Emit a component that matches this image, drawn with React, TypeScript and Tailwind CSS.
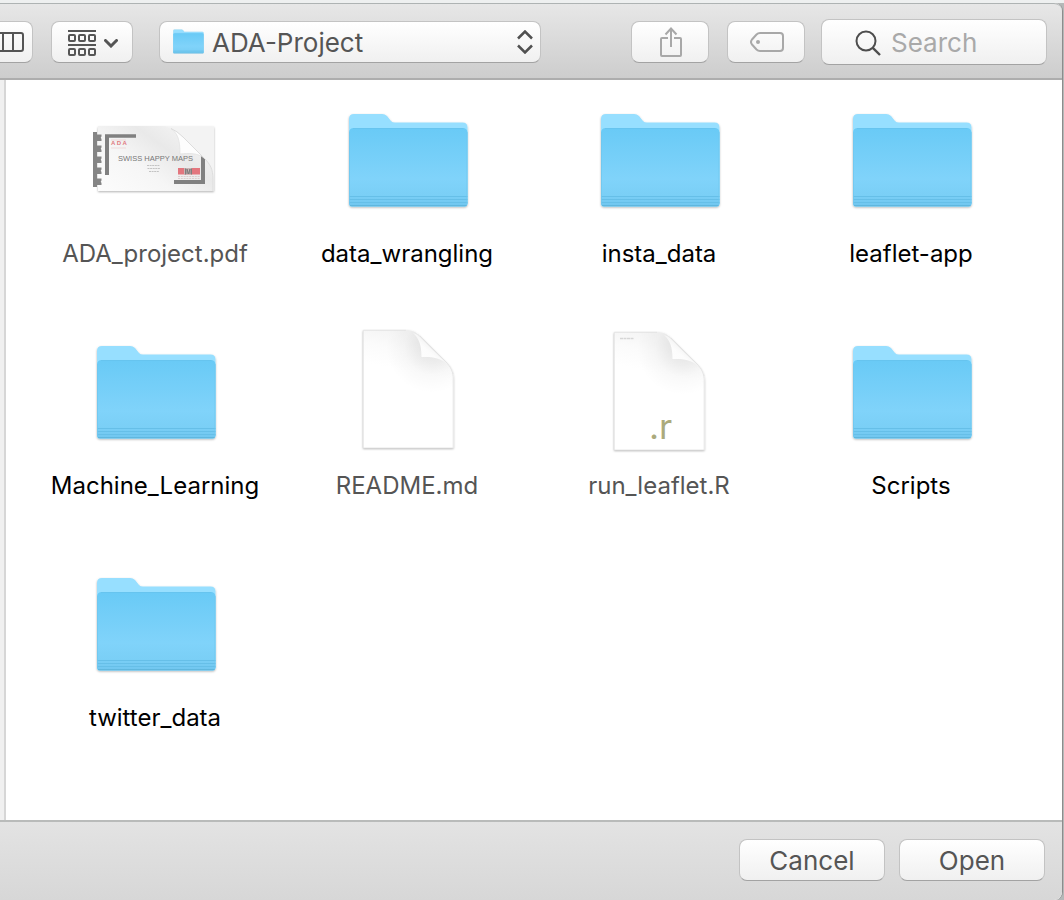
import React, { useState } from "react";

type Kind = "folder" | "pdf" | "blank" | "r";

const files: { name: string; kind: Kind }[] = [
  { name: "ADA_project.pdf", kind: "pdf" },
  { name: "data_wrangling", kind: "folder" },
  { name: "insta_data", kind: "folder" },
  { name: "leaflet-app", kind: "folder" },
  { name: "Machine_Learning", kind: "folder" },
  { name: "README.md", kind: "blank" },
  { name: "run_leaflet.R", kind: "r" },
  { name: "Scripts", kind: "folder" },
  { name: "twitter_data", kind: "folder" },
];

const control =
  "flex items-center justify-center border border-[#c3c3c3] border-b-[#a3a3a3] bg-linear-to-b from-white to-[#f0f0f0] text-[#555]";

function Defs() {
  return (
    <svg className="absolute size-0" aria-hidden="true">
      <defs>
        <linearGradient id="folderFront" x1="0" y1="0" x2="0" y2="1">
          <stop offset="0" stopColor="#69caf6" />
          <stop offset="0.65" stopColor="#80d3fa" />
          <stop offset="0.86" stopColor="#7acff6" />
          <stop offset="1" stopColor="#70c6ef" />
        </linearGradient>
        <linearGradient id="pageShade" x1="0.35" y1="0" x2="0.2" y2="1">
          <stop offset="0" stopColor="#f4f4f4" />
          <stop offset="0.15" stopColor="#fbfbfb" />
          <stop offset="0.32" stopColor="#ffffff" />
        </linearGradient>
        <radialGradient id="curlShade" gradientUnits="userSpaceOnUse" cx="88" cy="18" r="46">
          <stop offset="0" stopColor="#000" stopOpacity="0.1" />
          <stop offset="0.35" stopColor="#000" stopOpacity="0.06" />
          <stop offset="0.6" stopColor="#000" stopOpacity="0.025" />
          <stop offset="1" stopColor="#000" stopOpacity="0" />
        </radialGradient>
        <linearGradient id="fold" x1="0" y1="1" x2="0.6" y2="0.35">
          <stop offset="0" stopColor="#ffffff" />
          <stop offset="0.7" stopColor="#fcfcfc" />
          <stop offset="1" stopColor="#f0f0f0" />
        </linearGradient>
        <linearGradient id="pdfShade" x1="0" y1="1" x2="1" y2="0.2">
          <stop offset="0" stopColor="#fcfcfc" />
          <stop offset="0.4" stopColor="#f6f6f6" />
          <stop offset="0.68" stopColor="#e9e9e9" />
          <stop offset="1" stopColor="#f6f6f6" />
        </linearGradient>
        <filter id="drop" x="-10%" y="-10%" width="120%" height="125%">
          <feDropShadow dx="0" dy="1" stdDeviation="1" floodColor="#000" floodOpacity="0.3" />
        </filter>
      </defs>
    </svg>
  );
}

function FolderShape() {
  return (
    <>
      <path
        filter="url(#drop)"
        fill="#97dfff"
        d="M5 22Q5 17 10 17H38Q41 17 43 19L47 24Q48.500 25.500 51 25.500H118.500Q123.500 25.500 123.500 30.500V106.500Q123.500 109.500 120.500 109.500H8Q5 109.500 5 106.500Z"
      />
      <path
        fill="url(#folderFront)"
        d="M5 36Q5 31 10 31H118.500Q123.500 31 123.500 36V106.500Q123.500 109.500 120.500 109.500H8Q5 109.500 5 106.500Z"
      />
      <path d="M9 31.500H119.500" stroke="#66c4ef" strokeWidth="1" />
      <path d="M5 99.500H123.500M5 102.500H123.500M5 105.500H123.500" stroke="#66bfe8" strokeWidth="1" />
      <path d="M6 108.700H122.500" stroke="#5db3db" strokeWidth="1" />
      <path d="M5.500 35V107M123 35V107" stroke="#70c6ee" strokeWidth="0.8" />
    </>
  );
}

function PageShape() {
  return (
    <>
      <path
        filter="url(#drop)"
        fill="url(#pageShade)"
        d="M19 1H62C68 1 72 3 76 7L102 33C107 38 109.500 43 109.500 50V119H19Z"
      />
      <path
        fill="url(#curlShade)"
        d="M19 1H62C68 1 72 3 76 7L102 33C107 38 109.500 43 109.500 50V119H19Z"
      />
      <path
        fill="url(#fold)"
        d="M69 4C75 9 77.500 16 77.500 28C91 27.500 99 29.500 106 38L76 8Q73 5 69 4Z"
      />
      <path
        fill="none"
        stroke="#e0e0e0"
        strokeWidth="0.8"
        d="M62 1.300H19.300V119H109.200V50C109.200 43 107 38 102 33L76 7"
      />
    </>
  );
}

function PdfShape() {
  const page = "M6 29H72C80 29.500 86 35 91 40L111 60C117 66 121 72 121 82V94H6Z";
  return (
    <>
      <rect x="6" y="29.500" width="116" height="64.500" fill="#f4f4f4" filter="url(#drop)" />
      <path d={page} fill="url(#pdfShade)" />
      <rect x="1" y="35" width="4" height="55" fill="#858585" />
      <path
        d="M4 37.500H9.500V44H4ZM4 48.500H9.500V55H4ZM4 59.500H9.500V66H4ZM4 70.500H9.500V77H4ZM4 81.500H9.500V88H4Z"
        fill="#858585"
      />
      <path
        d="M10 39.500Q7.500 40.700 10 42ZM10 50.500Q7.500 51.700 10 53ZM10 61.500Q7.500 62.700 10 64ZM10 72.500Q7.500 73.700 10 75ZM10 83.500Q7.500 84.700 10 86Z"
        fill="#f6f6f6"
      />
      <path d="M13 37.200H44V40.700H17V78H13Z" fill="#808080" />
      <path d="M109 56H113V87H82V83H109Z" fill="#808080" />
      <g fontFamily="Liberation Sans, Arial, sans-serif">
        <text x="19" y="48.300" fontSize="6" fontWeight="bold" fill="#e0797f">A D A</text>
        <text x="26" y="64" fontSize="7.500" fill="#777">SWISS HAPPY MAPS</text>
      </g>
      <path d="M19 51H34M19 43H34" stroke="#eccaca" strokeWidth="0.6" />
      <path d="M55 68.500H68M55.500 71.500H68M57 74.500H67" stroke="#bdbdbd" strokeWidth="0.900" strokeDasharray="2 0.6" />
      <rect x="86" y="71" width="22" height="6.500" fill="#e3767e" />
      <rect x="92" y="71" width="8" height="6.500" fill="#c9b4b4" />
      <path d="M93.500 71.500V77.500M95 77V72L96.500 77L98 72V77M99.500 71.500V77.500" stroke="#777" strokeWidth="0.900" fill="none" />
      <path d="M86 79.500H108M86 81.500H108" stroke="#d5c4c4" strokeWidth="0.800" strokeDasharray="2 0.8" />
      <path d="M72 29.500H122V94H121V82C121 72 117 66 111 60L91 40C86 35 80 30 72 29.500Z" fill="#f3f3f3" />
      <path d="M79 31.500C86 37 88 43 88 57C97 56 106 56 112 61L91 40Q85 34 79 31.500Z" fill="#fdfdfd" />
      <path d="M79 31.500C86 37 88 43 88 57C97 56 106 56 112 61" stroke="#e0e0e0" strokeWidth="0.700" fill="none" />
      <path d="M79 31.500Q85 34 91 40L112 61C118 67 121 72 121 82V94" stroke="#dcdcdc" strokeWidth="1" fill="none" />
    </>
  );
}

function FileIcon({ kind }: { kind: Kind }) {
  return (
    <svg viewBox="0 0 128 128" className="size-32 overflow-visible" aria-hidden="true">
      {kind === "folder" && <FolderShape />}
      {kind === "pdf" && <PdfShape />}
      {kind === "blank" && <PageShape />}
      {kind === "r" && (
        <g transform="translate(-1 2)">
          <PageShape />
          <path d="M25 7.500H39" stroke="#d6d6d6" strokeWidth="1.500" strokeDasharray="3 0.5" />
          <text x="54" y="108" fontFamily="Inter, sans-serif" fontSize="35" fill="#abaa7c">.r</text>
        </g>
      )}
    </svg>
  );
}

function Toolbar() {
  return (
    <header className="flex h-[77px] items-center rounded-tr-lg border-t border-b-2 border-t-[#aeb3b3] border-b-[#adadad] bg-linear-to-b from-[#e7e7e7] to-[#cdcdcd] pt-0.5 pr-[15px]">
      <button type="button" aria-label="Column view" className={`${control} h-[42px] w-[33px] justify-start rounded-r-lg border-l-0`}>
        <svg viewBox="0 0 25 20" className="h-5 w-[25px]" fill="none" stroke="currentColor" strokeWidth="2">
          <path d="M0 1H21Q23 1 23 3V17Q23 19 21 19H0M3 1V19M13 1V19" />
        </svg>
      </button>
      <button type="button" aria-label="Group items" className={`${control} ml-[18px] h-[42px] w-[82px] gap-2 rounded-lg pt-0.5 pl-0.5`}>
        <svg viewBox="0 0 28 26" className="h-[26px] w-7" fill="none" stroke="currentColor" strokeWidth="2">
          <path d="M0 1H28M0 15H28" />
          <rect x="1" y="5" width="6" height="6" rx="1" />
          <rect x="11" y="5" width="6" height="6" rx="1" />
          <rect x="21" y="5" width="6" height="6" rx="1" />
          <rect x="1" y="19" width="6" height="6" rx="1" />
          <rect x="11" y="19" width="6" height="6" rx="1" />
          <rect x="21" y="19" width="6" height="6" rx="1" />
        </svg>
        <svg viewBox="0 0 14 9" className="h-[9px] w-3.5" fill="none" stroke="currentColor" strokeWidth="3">
          <path d="M1.500 1.500L7 7L12.500 1.500" strokeLinecap="round" />
        </svg>
      </button>
      <div className="relative ml-[26px] w-[382px] shrink">
        <select aria-label="Folder" className="block h-[42px] w-full appearance-none rounded-lg border border-[#c3c3c3] border-b-[#a3a3a3] bg-linear-to-b from-white to-[#f0f0f0] pt-0.5 pr-10 pl-[52px] text-[26px] leading-8 text-[#555]">
          <option>ADA-Project</option>
        </select>
        <svg viewBox="4 15 121 97" className="pointer-events-none absolute top-2 left-3.5 h-[25px] w-[31px]" aria-hidden="true">
          <FolderShape />
        </svg>
        <svg viewBox="0 0 16 24" className="pointer-events-none absolute top-[9px] right-2 h-6 w-4" fill="none" stroke="#505050" strokeWidth="2.500" aria-hidden="true">
          <path d="M1 8.500L8 1.500L15 8.500M1 15.500L8 22.500L15 15.500" />
        </svg>
      </div>
      <div className="grow" />
      <button type="button" aria-label="Share" disabled className={`${control} h-[42px] w-[78px] rounded-lg pl-0.5`}>
        <svg viewBox="0 0 24 30" className="h-[30px] w-6" fill="none" stroke="#a8a8a8" strokeWidth="2">
          <path d="M9 11H3Q2 11 2 12V28Q2 29 3 29H21Q22 29 22 28V12Q22 11 21 11H15M12 20V1.500M6.500 7.500L12 1.500L17.500 7.500" />
        </svg>
      </button>
      <button type="button" aria-label="Edit tags" disabled className={`${control} ml-[18px] h-[42px] w-[78px] rounded-lg pl-0.5`}>
        <svg viewBox="0 0 34 20" className="h-5 w-[34px]" fill="none" stroke="#a8a8a8" strokeWidth="2">
          <path d="M10 1H30Q33 1 33 4V16Q33 19 30 19H10Q8 19 6.500 17.500L2 12.500Q0 10 2 7.500L6.500 2.500Q8 1 10 1Z" />
          <circle cx="8" cy="10" r="2" fill="#a8a8a8" stroke="none" />
        </svg>
      </button>
      <label className={`${control} ml-4 h-[46px] w-[226px] rounded-lg pt-0.5 pl-[33px]`}>
        <svg viewBox="0 0 26 26" className="size-[26px] shrink-0" fill="none" stroke="#4d4d4d" strokeWidth="2" aria-hidden="true">
          <circle cx="11" cy="11" r="9.500" />
          <path d="M17.800 17.800L25 25" strokeWidth="2.400" />
        </svg>
        <input type="text" aria-label="Search" placeholder="Search" className="ml-2.5 w-full min-w-0 bg-transparent text-[26px] leading-8 outline-none placeholder:text-[#a9a9a9]" />
      </label>
    </header>
  );
}

export default function App() {
  const [selected, setSelected] = useState("");
  return (
    <div className="flex min-h-screen flex-col bg-[#b5b8b8] font-['Inter','Liberation_Sans',sans-serif]">
      <Defs />
      <div className="flex flex-1 flex-col border-t-[3px] border-[#eef0f0]">
        <div className="mr-px flex flex-1 flex-col rounded-tr-lg rounded-br-lg border-r border-[#8c8c8c] bg-white">
          <Toolbar />
          <div className="flex flex-1">
            <div className="w-1 bg-[#f0f0f0]" />
            <main className="flex-1 border-l-2 border-[#d6d6d6] px-6 pt-[17px] pb-6">
              <ul className="grid grid-cols-4 gap-y-[60px]">
                {files.map((f) => (
                  <li key={f.name} className="flex justify-center">
                    <button
                      type="button"
                      disabled={f.kind !== "folder"}
                      aria-pressed={selected === f.name}
                      onClick={() => setSelected(f.name)}
                      className="flex flex-col items-center gap-[13px] text-[24px] leading-[31px] text-black disabled:text-[#555]"
                    >
                      <FileIcon kind={f.kind} />
                      <span className="pr-0.5">{f.name}</span>
                    </button>
                  </li>
                ))}
              </ul>
            </main>
          </div>
          <footer className="flex h-20 items-center justify-end gap-3.5 rounded-br-lg border-t-2 border-[#b9bbba] bg-linear-to-b from-[#e3e3e3] to-[#d7d7d7] pr-[17px] pb-0.5">
            <button type="button" className={`${control} h-[42px] w-[146px] rounded-lg pt-0.5 text-[26px] leading-8`}>Cancel</button>
            <button type="button" className={`${control} h-[42px] w-[146px] rounded-lg pt-0.5 text-[26px] leading-8`}>Open</button>
          </footer>
        </div>
      </div>
    </div>
  );
}
